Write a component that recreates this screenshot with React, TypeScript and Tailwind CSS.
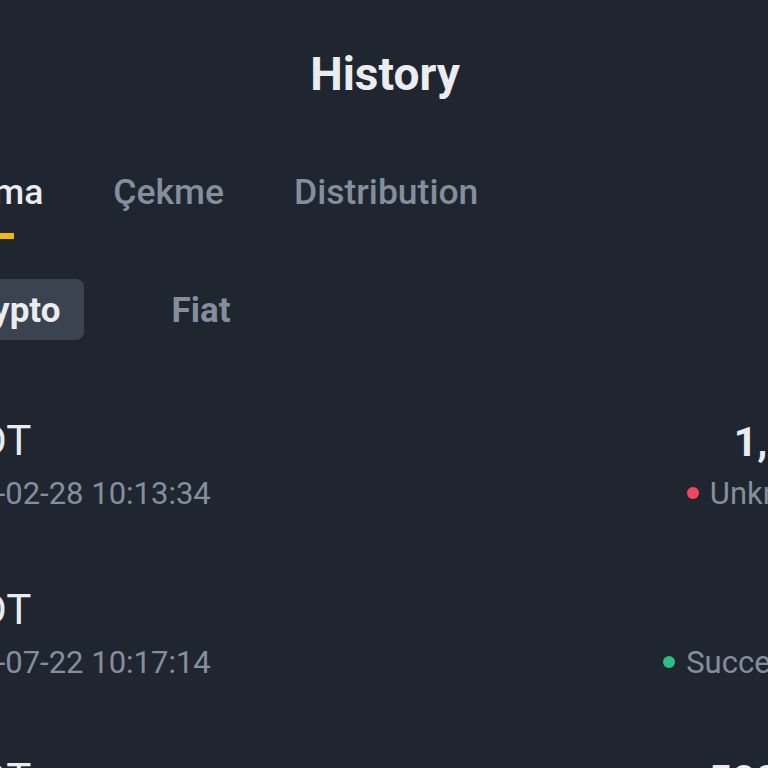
import React, { useState } from 'react';

type Row = {
  coin: string;
  time: string;
  amount: string;
  status: 'Unknown' | 'Successful';
};

const rows: Row[] = [
  { coin: 'USDT', time: '2024-02-28 10:13:34', amount: '1,000', status: 'Unknown' },
  { coin: 'USDT', time: '2023-07-22 10:17:14', amount: '20', status: 'Successful' },
  { coin: 'USDT', time: '2023-07-21 09:42:05', amount: '508.72', status: 'Successful' },
];

const tabs = ['Yatırma', 'Çekme', 'Distribution'];

const App: React.FC = () => {
  const [tab, setTab] = useState(0);
  const [kind, setKind] = useState<'Crypto' | 'Fiat'>('Crypto');

  return (
    <div className="w-[768px] h-[768px] overflow-hidden bg-[#1f2630] font-['Roboto','Liberation_Sans',sans-serif]">
      <div className="w-[911px] -ml-[73px]">
        <h1 className="pt-[51px] pl-[5px] text-center text-[46px] font-bold leading-none text-[#eaecef]">History</h1>

        {/* main tabs */}
        <div className="mt-[78px] -ml-[7px] flex gap-[70px]">
          {tabs.map((t, i) => (
            <button key={t} onClick={() => setTab(i)} className="flex flex-col items-center">
              <span className={`text-[35.5px] font-medium leading-none ${tab === i ? 'text-[#eaecef]' : 'text-[#848e9c]'}`}>{t}</span>
              <span className={`mt-[22px] h-[6px] w-[64px] ${tab === i ? 'bg-[#f0b90b]' : 'bg-transparent'}`} />
            </button>
          ))}
        </div>

        {/* crypto / fiat */}
        <div className="mt-[40px] ml-[5px] flex gap-[63px]">
          {(['Crypto', 'Fiat'] as const).map((k) => (
            <button
              key={k}
              onClick={() => setKind(k)}
              className={`h-[61px] px-6 pt-[3px] rounded-lg flex items-center text-[35px] font-bold leading-none ${
                kind === k ? 'bg-[#3b4250] text-[#eaecef]' : 'text-[#848e9c]'
              }`}
            >
              {k}
            </button>
          ))}
        </div>

        {/* records */}
        <div className="mt-[80px] flex flex-col gap-[80px]">
          {rows.map((r, i) => (
            <div key={i} className="flex justify-between">
              <div className="flex flex-col">
                <span className="text-[42px] leading-none text-[#eaecef]">{r.coin}</span>
                <span className="mt-[16px] text-[31px] leading-none text-[#848e9c]">{r.time}</span>
              </div>
              <div className="flex flex-col items-end">
                <span className="mt-[2px] text-[41px] font-bold leading-none text-[#eaecef]">{r.amount}</span>
                <span className="mt-[15px] flex items-center gap-[11px] text-[31px] leading-none text-[#848e9c]">
                  <span className={`w-3 h-3 rounded-full ${r.status === 'Unknown' ? 'bg-[#f6465d]' : 'bg-[#2ebd85]'}`} />
                  {r.status}
                </span>
              </div>
            </div>
          ))}
        </div>
      </div>
    </div>
  );
};

export default App;
